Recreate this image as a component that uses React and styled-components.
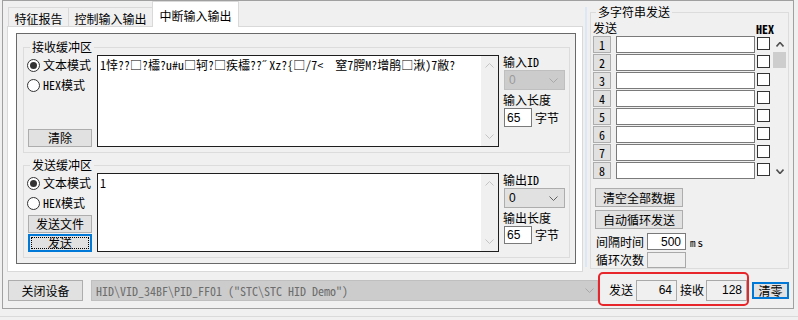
import React from "react";
import styled, { createGlobalStyle, css } from "styled-components";

const UI = `"Noto Sans CJK SC", "Noto Sans", sans-serif`;
const SONG = `"Noto Sans Mono CJK SC", "Liberation Mono", "Noto Sans CJK SC", monospace`;
const NUM = `"Liberation Sans", Arial, sans-serif`;

const Global = createGlobalStyle`
  html, body { margin: 0; padding: 0; background: #f0f0f0; }
  body { font-family: ${UI}; font-size: 12px; color: #000; }
  * { box-sizing: border-box; }
`;

const Screen = styled.div`
  width: 798px;
  height: 320px;
  overflow: hidden;
  background: #f0f0f0;
  display: flex;
  flex-direction: column;
`;

const Frame = styled.div`
  margin-left: 2px;
  width: 792px;
  height: 309px;
  border: 1px solid #a0a0a0;
  display: flex;
  flex-direction: column;
`;

const BottomLine = styled.div`
  margin-top: 7px;
  height: 1px;
  background: #dadada;
`;

const TopArea = styled.div`
  display: flex;
  height: 271px;
`;

const TabControl = styled.div`
  margin-left: 4px;
  width: 576px;
  display: flex;
  flex-direction: column;
`;

const TabStrip = styled.div`
  display: flex;
  align-items: flex-end;
  height: 25px;
  padding-left: 1px;
`;

const Tab = styled.div`
  flex: none;
  width: ${(p) => p.$w}px;
  height: ${(p) => (p.$active ? 26 : 19)}px;
  margin-left: ${(p) => (p.$first ? 0 : -1)}px;
  border: 1px solid #d9d9d9;
  border-bottom: none;
  background: ${(p) => (p.$active ? "#ffffff" : "#f0f0f0")};
  padding-top: ${(p) => (p.$active ? 7 : 4)}px;
  line-height: 14px;
  text-align: center;
  white-space: nowrap;
  ${(p) =>
    p.$active &&
    css`
      margin-bottom: -1px;
      position: relative;
      z-index: 1;
    `}
`;

const TabPage = styled.div`
  width: 576px;
  height: 246px;
  border: 1px solid #d9d9d9;
  background: #ffffff;
  padding: 6px 0 0 8px;
`;

const Panel = styled.div`
  width: 560px;
  height: 231px;
  border: 1px solid #696969;
  background: #f0f0f0;
  padding: 6px 5px 0 6px;
  display: flex;
  flex-direction: column;
  gap: 5px;
`;

const Group = styled.fieldset`
  margin: 0;
  padding: 0;
  min-width: 0;
  border: 1px solid #dcdcdc;
  ${(p) =>
    p.$w &&
    css`
      width: ${p.$w}px;
    `}
  ${(p) =>
    p.$mt &&
    css`
      margin-top: ${p.$mt}px;
      align-self: flex-start;
    `}
`;

const Legend = styled.legend`
  margin-left: ${(p) => p.$ml ?? 6}px;
  padding: 0 2px;
  line-height: 14px;
  font-size: 12px;
`;

const GroupBody = styled.div`
  display: flex;
  padding: 1px 4px ${(p) => p.$pb}px 3px;
`;

const ModeColumn = styled.div`
  width: 65px;
  flex: none;
  height: ${(p) => p.$h}px;
  display: flex;
  flex-direction: column;
  justify-content: ${(p) => (p.$spread ? "space-between" : "flex-start")};
`;

const RadioRow = styled.div`
  height: 20px;
  display: flex;
  align-items: center;
  gap: 3px;
  line-height: 14px;
  white-space: nowrap;
`;

const RadioCircle = styled.span`
  flex: none;
  width: 13px;
  height: 13px;
  border-radius: 50%;
  border: 1px solid #333;
  background: #fff;
  display: flex;
  align-items: center;
  justify-content: center;
  &::after {
    content: "";
    width: 7px;
    height: 7px;
    border-radius: 50%;
    background: ${(p) => (p.$checked ? "#333" : "transparent")};
  }
`;

const Latin = styled.span`
  font-family: ${SONG};
  font-size: 12px;
`;

const Button = styled.button`
  flex: none;
  width: ${(p) => p.$w}px;
  height: ${(p) => p.$h || 18}px;
  margin: ${(p) => p.$m || "0"};
  padding: 0;
  background: #e1e1e1;
  border: 1px solid #adadad;
  color: #000;
  font-family: ${UI};
  font-size: 12px;
  line-height: 14px;
  display: flex;
  align-items: center;
  justify-content: center;
  white-space: nowrap;
  ${(p) =>
    p.$focused &&
    css`
      border: 2px solid #0078d7;
      outline: 1px dotted #000;
      outline-offset: -4px;
    `}
  ${(p) =>
    p.$default &&
    css`
      border: 2px solid #0078d7;
    `}
`;

const Editor = styled.div`
  flex: none;
  margin-left: 5px;
  width: 402px;
  height: ${(p) => p.$h}px;
  border: 1px solid #1e1e1e;
  background: #fff;
  display: flex;
`;

const EditorText = styled.div`
  flex: 1;
  padding: 2px 2px;
  font-family: ${SONG};
  font-size: 12px;
  line-height: 14px;
  white-space: pre;
  overflow: hidden;
`;

const ScrollTrack = styled.div`
  flex: none;
  width: 17px;
  background: #f0f0f0;
  display: flex;
  flex-direction: column;
  justify-content: space-between;
  align-items: center;
  padding: 7px 0 7px;
`;

const SideColumn = styled.div`
  flex: none;
  margin-left: 4px;
  width: 62px;
  display: flex;
  flex-direction: column;
`;

const FieldLabel = styled.div`
  line-height: 14px;
  white-space: nowrap;
  margin-top: ${(p) => p.$mt || 0}px;
`;

const Combo = styled.div`
  margin: 1px 0 0 1px;
  width: 61px;
  height: 20px;
  border: 1px solid ${(p) => (p.$disabled ? "#bfbfbf" : "#adadad")};
  background: ${(p) => (p.$disabled ? "#cccccc" : "#e1e1e1")};
  color: ${(p) => (p.$disabled ? "#9a9a9a" : "#000")};
  font-family: ${NUM};
  font-size: 12px;
  display: flex;
  align-items: center;
  justify-content: space-between;
  padding: 0 6px 0 4px;
`;

const LengthRow = styled.div`
  margin-top: 1px;
  display: flex;
  align-items: center;
  gap: 3px;
  line-height: 14px;
`;

const Field = styled.div`
  flex: none;
  width: ${(p) => p.$w}px;
  height: ${(p) => p.$h}px;
  margin-left: ${(p) => p.$ml || 0}px;
  border: 1px solid ${(p) => (p.$readonly ? "#a9a9a9" : "#7a7a7a")};
  background: ${(p) => (p.$readonly ? "#f0f0f0" : "#fff")};
  font-family: ${NUM};
  font-size: 12px;
  display: flex;
  align-items: center;
  justify-content: ${(p) => (p.$right ? "flex-end" : "flex-start")};
  padding: ${(p) => (p.$right ? "0 4px 0 0" : "0 0 0 2px")};
`;

const Divider = styled.div`
  flex: none;
  width: 2px;
  margin: 6px 3px 5px 2px;
  background: #dce8f5;
`;

const MultiBody = styled.div`
  padding: 0 1px 0 2px;
  display: flex;
  flex-direction: column;
`;

const HeaderRow = styled.div`
  height: 17px;
  display: flex;
  justify-content: space-between;
  align-items: flex-end;
  line-height: 14px;
  padding-bottom: 1px;
`;

const HexLabel = styled.span`
  font-family: ${SONG};
  font-size: 12px;
  font-weight: bold;
  margin-right: 13px;
  line-height: 12px;
`;

const RowsArea = styled.div`
  display: flex;
`;

const Rows = styled.div`
  display: flex;
  flex-direction: column;
  gap: 1px;
`;

const StringRow = styled.div`
  height: 17px;
  display: flex;
  align-items: flex-start;
`;

const NumButton = styled.div`
  flex: none;
  width: 18px;
  height: 17px;
  background: #e1e1e1;
  border: 1px solid #adadad;
  font-family: ${SONG};
  font-size: 12px;
  display: flex;
  align-items: center;
  justify-content: center;
`;

const StringInput = styled.div`
  flex: none;
  margin-left: 5px;
  width: 139px;
  height: 17px;
  border: 1px solid #7a7a7a;
  background: #fff;
`;

const CheckBox = styled.span`
  flex: none;
  margin: 1px 0 0 2px;
  width: 13px;
  height: 13px;
  border: 1px solid #333;
  background: #fff;
`;

const ListScroll = styled.div`
  flex: none;
  margin-left: 3px;
  width: 14px;
  display: flex;
  flex-direction: column;
`;

const ArrowCell = styled.div`
  height: 16px;
  display: flex;
  align-items: center;
  justify-content: center;
`;

const Thumb = styled.div`
  width: 13px;
  height: 16px;
  background: #cdcdcd;
`;

const Spacer = styled.div`
  flex: 1;
`;

const SettingRow = styled.div`
  display: flex;
  align-items: center;
  margin-top: ${(p) => p.$mt}px;
  height: ${(p) => p.$h}px;
  line-height: 14px;
  white-space: nowrap;
`;

const LabelText = styled.span`
  margin-left: 3px;
  width: 48px;
  flex: none;
`;

const MsText = styled.span`
  margin-left: 4px;
  font-family: ${SONG};
  font-size: 11px;
  letter-spacing: 2px;
`;

const BottomRow = styled.div`
  display: flex;
  align-items: flex-start;
  height: 36px;
`;

const DeviceCombo = styled.div`
  flex: none;
  margin: 8px 0 0 8px;
  width: 507px;
  height: 21px;
  border: 1px solid #bfbfbf;
  background: #cccccc;
  color: #6d6d6d;
  font-family: ${SONG};
  font-size: 12px;
  white-space: pre;
  display: flex;
  align-items: center;
  justify-content: space-between;
  padding: 0 3px 0 4px;
`;

const Highlight = styled.div`
  flex: none;
  width: 151px;
  height: 34px;
  border: 2px solid #e6262b;
  border-radius: 5px;
  display: flex;
  align-items: center;
  padding: 2px 0 0 9px;
  line-height: 14px;
  white-space: nowrap;
`;

const CounterLabel = styled.span`
  margin-left: ${(p) => p.$ml || 0}px;
`;

const Chevron = styled.svg`
  display: block;
  flex: none;
`;

function Arrow({ dir = "down", color = "#606060", w = 9, h = 5, sw = 1 }) {
  const pts =
    dir === "down"
      ? `0.5,0.5 ${w / 2},${h - 0.5} ${w - 0.5},0.5`
      : `0.5,${h - 0.5} ${w / 2},0.5 ${w - 0.5},${h - 0.5}`;
  return (
    <Chevron width={w} height={h} viewBox={`0 0 ${w} ${h}`}>
      <polyline points={pts} fill="none" stroke={color} strokeWidth={sw} />
    </Chevron>
  );
}

function Radio({ checked, children }) {
  return (
    <RadioRow>
      <RadioCircle $checked={checked} />
      <span>{children}</span>
    </RadioRow>
  );
}

const garbled = "1悻??□?櫺?u#u□轲?□疾櫺??˝Xz?{□/7<  窒7腭M?增鹃□湫)7敝?";

export default function App() {
  const rows = [1, 2, 3, 4, 5, 6, 7, 8];
  return (
    <>
      <Global />
      <Screen>
        <Frame>
          <TopArea>
            <TabControl>
              <TabStrip>
                <Tab $w={61} $first>
                  特征报告
                </Tab>
                <Tab $w={85}>控制输入输出</Tab>
                <Tab $w={87} $active>
                  中断输入输出
                </Tab>
              </TabStrip>
              <TabPage>
                <Panel>
                  <Group>
                    <Legend>接收缓冲区</Legend>
                    <GroupBody $pb={5}>
                      <ModeColumn $h={92} $spread>
                        <div>
                          <Radio checked>文本模式</Radio>
                          <Radio>
                            <Latin>HEX</Latin>模式
                          </Radio>
                        </div>
                        <Button $w={64} $m="0 0 0 1px">
                          清除
                        </Button>
                      </ModeColumn>
                      <Editor $h={92}>
                        <EditorText>{garbled}</EditorText>
                        <ScrollTrack>
                          <Arrow dir="up" color="#c4c4c4" />
                          <Arrow dir="down" color="#c4c4c4" />
                        </ScrollTrack>
                      </Editor>
                      <SideColumn>
                        <FieldLabel>
                          输入<Latin>ID</Latin>
                        </FieldLabel>
                        <Combo $disabled>
                          <span>0</span>
                          <Arrow color="#a8a8a8" />
                        </Combo>
                        <FieldLabel $mt={3}>输入长度</FieldLabel>
                        <LengthRow>
                          <Field $w={28} $h={19} $ml={1}>
                            65
                          </Field>
                          <span>字节</span>
                        </LengthRow>
                      </SideColumn>
                    </GroupBody>
                  </Group>
                  <Group>
                    <Legend>发送缓冲区</Legend>
                    <GroupBody $pb={5}>
                      <ModeColumn $h={79}>
                        <Radio checked>文本模式</Radio>
                        <Radio>
                          <Latin>HEX</Latin>模式
                        </Radio>
                        <Button $w={64} $m="2px 0 0 1px">
                          发送文件
                        </Button>
                        <Button $w={64} $m="1px 0 0 1px" $focused>
                          发送
                        </Button>
                      </ModeColumn>
                      <Editor $h={79}>
                        <EditorText>1</EditorText>
                        <ScrollTrack>
                          <Arrow dir="up" color="#c4c4c4" />
                          <Arrow dir="down" color="#c4c4c4" />
                        </ScrollTrack>
                      </Editor>
                      <SideColumn>
                        <FieldLabel>
                          输出<Latin>ID</Latin>
                        </FieldLabel>
                        <Combo>
                          <span>0</span>
                          <Arrow color="#606060" />
                        </Combo>
                        <FieldLabel $mt={3}>输出长度</FieldLabel>
                        <LengthRow>
                          <Field $w={28} $h={18} $ml={1}>
                            65
                          </Field>
                          <span>字节</span>
                        </LengthRow>
                      </SideColumn>
                    </GroupBody>
                  </Group>
                </Panel>
              </TabPage>
            </TabControl>
            <Divider />
            <Group $w={199} $mt={4}>
              <Legend $ml={5}>多字符串发送</Legend>
              <MultiBody>
                <HeaderRow>
                  <span>发送</span>
                  <HexLabel>HEX</HexLabel>
                </HeaderRow>
                <RowsArea>
                  <Rows>
                    {rows.map((n) => (
                      <StringRow key={n}>
                        <NumButton>{n}</NumButton>
                        <StringInput />
                        <CheckBox />
                      </StringRow>
                    ))}
                  </Rows>
                  <ListScroll>
                    <ArrowCell>
                      <Arrow dir="up" w={8} h={5} sw={1.6} color="#505050" />
                    </ArrowCell>
                    <Thumb />
                    <Spacer />
                    <ArrowCell>
                      <Arrow dir="down" w={8} h={5} sw={1.6} color="#505050" />
                    </ArrowCell>
                  </ListScroll>
                </RowsArea>
                <Button $w={88} $h={19} $m="9px 0 0 2px">
                  清空全部数据
                </Button>
                <Button $w={88} $h={19} $m="3px 0 0 2px">
                  自动循环发送
                </Button>
                <SettingRow $mt={4} $h={17}>
                  <LabelText>间隔时间</LabelText>
                  <Field $w={39} $h={17} $ml={3} $right>
                    500
                  </Field>
                  <MsText>ms</MsText>
                </SettingRow>
                <SettingRow $mt={2} $h={16}>
                  <LabelText>循环次数</LabelText>
                  <Field $w={39} $h={16} $ml={3} $readonly />
                </SettingRow>
              </MultiBody>
            </Group>
          </TopArea>
          <BottomRow>
            <Button $w={75} $h={21} $m="8px 0 0 5px">
              关闭设备
            </Button>
            <DeviceCombo>
              <span>{'HID\\VID_34BF\\PID_FF01 ("STC\\STC HID Demo")'}</span>
              <Arrow color="#a8a8a8" />
            </DeviceCombo>
            <Highlight>
              <CounterLabel>发送</CounterLabel>
              <Field $w={41} $h={21} $ml={3} $readonly $right>
                64
              </Field>
              <CounterLabel $ml={3}>接收</CounterLabel>
              <Field $w={41} $h={21} $ml={2} $readonly $right>
                128
              </Field>
            </Highlight>
            <Button $w={37} $h={17} $m="10px 0 0 3px" $default>
              清零
            </Button>
          </BottomRow>
        </Frame>
        <BottomLine />
      </Screen>
    </>
  );
}
